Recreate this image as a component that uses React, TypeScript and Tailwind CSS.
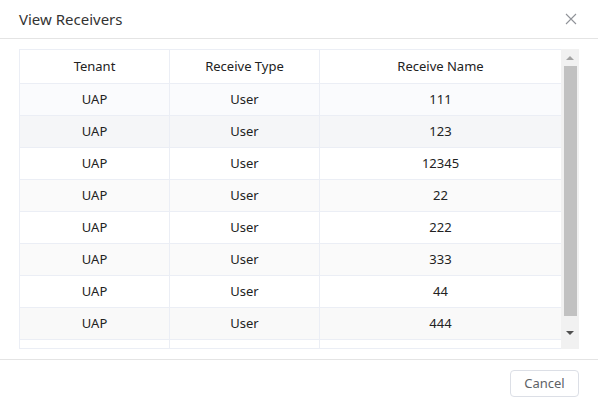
import React from "react";

const rows = [
  { n: "111", bg: "bg-[#fafbfd]" },
  { n: "123", bg: "bg-[#f5f6f8]" },
  { n: "12345", bg: "bg-white" },
  { n: "22", bg: "bg-[#fafafa]" },
  { n: "222", bg: "bg-white" },
  { n: "333", bg: "bg-[#fafafa]" },
  { n: "44", bg: "bg-white" },
  { n: "444", bg: "bg-[#f9f9f9]" },
  { n: "", bg: "bg-white" },
];

export default function App() {
  return (
    <div
      className="w-[598px] h-[412px] bg-white flex flex-col text-[#222]"
      style={{ fontFamily: '"Noto Sans", "Liberation Sans", sans-serif' }}
    >
      <div className="h-[39px] border-b border-[#e4e4e4] flex items-center justify-between pl-[19px] pr-[21px]">
        <span className="text-[15px] text-[#333]">View Receivers</span>
        <svg width="12" height="12" viewBox="0 0 12 12" className="text-[#909399]">
          <path d="M1 1L11 11M11 1L1 11" stroke="currentColor" strokeWidth="1.1" />
        </svg>
      </div>
      <div className="h-[320px] px-[19px] pt-[10px]">
        <div className="flex h-[300px]">
          <div className="w-[542px] h-[300px] border-l border-t border-b border-[#ebeef5] overflow-hidden text-[13px]">
            <div className="grid grid-cols-[150px_150px_241px] h-[34px] border-b border-[#ebeef5] bg-white">
              <div className="border-r border-[#ebeef5] flex items-center justify-center pt-[1px]">Tenant</div>
              <div className="border-r border-[#ebeef5] flex items-center justify-center pt-[1px]">Receive Type</div>
              <div className="flex items-center justify-center pt-[1px]">Receive Name</div>
            </div>
            {rows.map((r, i) => (
              <div key={i} className={`grid grid-cols-[150px_150px_241px] h-[32px] shrink-0 border-b border-[#ebeef5] ${r.bg}`}>
                <div className="border-r border-[#ebeef5] flex items-center justify-center pt-[1px]">{r.n ? "UAP" : ""}</div>
                <div className="border-r border-[#ebeef5] flex items-center justify-center pt-[1px]">{r.n ? "User" : ""}</div>
                <div className="flex items-center justify-center pt-[1px]">{r.n}</div>
              </div>
            ))}
          </div>
          <div className="w-[18px] h-[300px] bg-[#f1f1f1] flex flex-col items-center">
            <div className="h-[17px] flex items-center justify-center">
              <svg width="8" height="4" viewBox="0 0 8 4"><path d="M0 4L4 0L8 4Z" fill="#a3a3a3" /></svg>
            </div>
            <div className="w-[13px] h-[250px] bg-[#c1c1c1]" />
            <div className="flex-1 flex items-center justify-center">
              <svg width="8" height="4" viewBox="0 0 8 4"><path d="M0 0L8 0L4 4Z" fill="#505050" /></svg>
            </div>
          </div>
        </div>
      </div>
      <div className="flex-1 border-t border-[#e4e4e4] flex justify-end pr-[19px] pt-[10px]">
        <button className="w-[69px] h-[27px] rounded-[4px] border border-[#dcdfe6] text-[13px] text-[#606266] bg-white">
          Cancel
        </button>
      </div>
    </div>
  );
}
